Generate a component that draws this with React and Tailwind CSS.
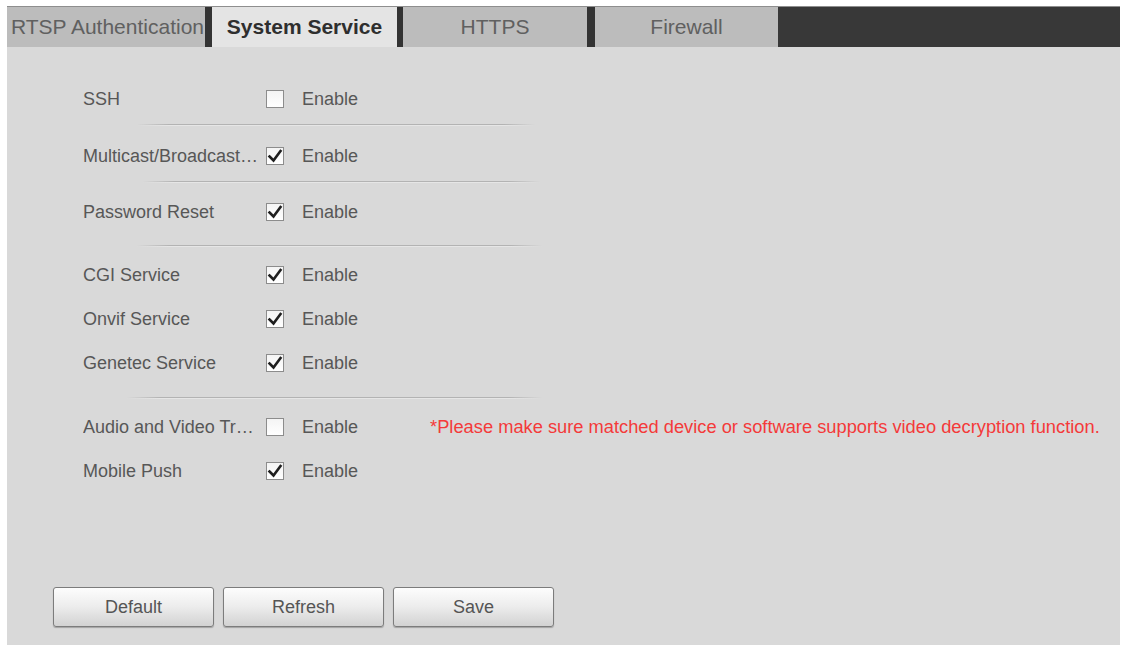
import React, { useState } from "react";

const tabs = [
    { name: "RTSP Authentication", width: "w-[198px]", active: false, clip: true },
    { name: "System Service", width: "w-[185px]", active: true },
    { name: "HTTPS", width: "w-[184px]", active: false },
    { name: "Firewall", width: "w-[183px]", active: false },
];

const dividers = ["w-[7px]", "w-[6px]", "w-[8px]", "w-0"];

const CheckBox = ({ checked, onClick }) => (
    <button
        type="button"
        onClick={onClick}
        className="w-[18px] h-[18px] shrink-0 border border-[#8c8c8c] bg-gradient-to-b from-[#f4f4f4] to-white flex items-center justify-center"
    >
        {checked && (
            <svg width="16" height="16" viewBox="0 0 16 16">
                <path d="M2.5 8.5 L6.5 12.5 L13.5 3" fill="none" stroke="#1f1f1f" strokeWidth="2.6" strokeLinecap="square" />
            </svg>
        )}
    </button>
);

const Separator = ({ className }) => (
    <div className={`h-[2px] flex flex-col ${className}`}>
        <div className="h-px bg-[linear-gradient(to_right,transparent,#b3b3b3_8%,#b3b3b3_92%,transparent)]" />
        <div className="h-px bg-[linear-gradient(to_right,transparent,#e6e6e6_8%,#e6e6e6_92%,transparent)]" />
    </div>
);

const App = () => {
    const [services, setServices] = useState({
        ssh: false,
        multicast: true,
        passwordReset: true,
        cgi: true,
        onvif: true,
        genetec: true,
        audioVideo: false,
        mobilePush: true,
    });

    const toggle = (key) => setServices({ ...services, [key]: !services[key] });

    const Row = ({ label, field, note }) => (
        <div className="h-[44px] flex items-center pl-[76px]">
            <span className="w-[183px] pr-[3px] truncate text-[18px] text-[#575757]" title={label}>
                {label}
            </span>
            <CheckBox checked={services[field]} onClick={() => toggle(field)} />
            <span className="ml-[18px] text-[18px] text-[#575757]">Enable</span>
            {note && <span className="ml-[72px] text-[18.3px] text-[#f43a3a] whitespace-nowrap">{note}</span>}
        </div>
    );

    return (
        <div className="w-[1123px] h-[645px] bg-white pl-[7px] pr-[3px] pt-[6px] font-['Liberation_Sans',Arial,sans-serif] overflow-hidden">
            <div className="flex h-[41px] bg-[#383838] border-t border-[#8e8e8e]">
                {tabs.map((tab, i) => (
                    <React.Fragment key={tab.name}>
                        <div
                            className={`${tab.width} h-full flex items-center overflow-hidden whitespace-nowrap text-[21px] ${
                                tab.active
                                    ? "bg-[#e4e4e4] text-[#2e2e2e] font-bold justify-center"
                                    : "bg-[#bcbcbc] text-[#606060]"
                            } ${tab.clip ? "justify-end pr-[1px]" : "justify-center"}`}
                        >
                            {tab.name}
                        </div>
                        <div className={`${dividers[i]} h-full bg-[#333]`} />
                    </React.Fragment>
                ))}
            </div>

            <div className="h-[598px] bg-[#d9d9d9] pt-[30px]">
                <Row label="SSH" field="ssh" />
                <Separator className="mt-[3px] mb-[8px] ml-[130px] w-[398px]" />
                <Row label="Multicast/Broadcast Search" field="multicast" />
                <Separator className="mt-[3px] mb-[7px] ml-[136px] w-[397px]" />
                <Row label="Password Reset" field="passwordReset" />
                <Separator className="mt-[11px] mb-[6px] ml-[130px] w-[405px]" />
                <Row label="CGI Service" field="cgi" />
                <Row label="Onvif Service" field="onvif" />
                <Row label="Genetec Service" field="genetec" />
                <Separator className="mt-[12px] mb-[6px] ml-[120px] w-[415px]" />
                <Row
                    label="Audio and Video Transmission Encryption"
                    field="audioVideo"
                    note="*Please make sure matched device or software supports video decryption function."
                />
                <Row label="Mobile Push" field="mobilePush" />

                <div className="flex gap-[9px] pl-[46px] mt-[94px]">
                    {["Default", "Refresh", "Save"].map((label) => (
                        <button
                            key={label}
                            type="button"
                            className="w-[161px] h-[40px] rounded-[3px] border border-[#7c7c7c] bg-gradient-to-b from-[#fdfdfd] via-[#ececec] to-[#d2d2d2] shadow-[0_1px_1px_rgba(0,0,0,0.25)] text-[18px] text-[#555]"
                        >
                            {label}
                        </button>
                    ))}
                </div>
            </div>
        </div>
    );
};

export default App;
